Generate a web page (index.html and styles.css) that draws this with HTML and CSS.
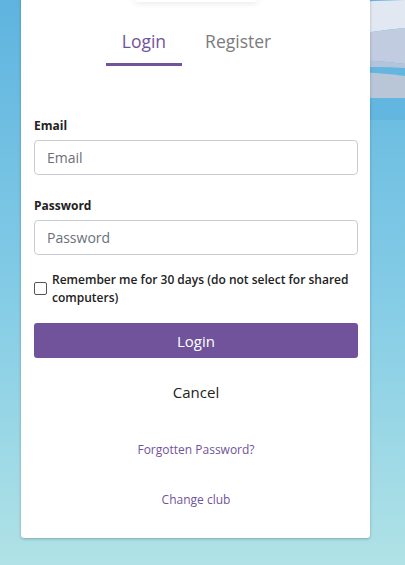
FILE: index.html
```html
<!DOCTYPE html>
<html>
<head>
<meta charset="utf-8">
<link rel="stylesheet" href="styles.css">
</head>
<body>
<svg class="waves" width="60" height="120" viewBox="0 0 60 120" aria-hidden="true">
  <rect x="0" y="0" width="60" height="120" fill="#62b6e0"/>
  <path d="M0 2 L60 0 L60 28 Q30 30 0 38 Z" fill="#e2e8f1"/>
  <path d="M0 38 Q30 30 60 28 L60 64 Q30 60 0 60 Z" fill="#c1cce0"/>
  <path d="M0 60 Q30 60 60 64 L60 68 Q30 66 0 68 Z" fill="#b4c4da"/>
  <path d="M0 72 Q30 72 60 76 L60 98 L0 98 Z" fill="#b9c6d8"/>
</svg>
<main class="card">
  <div class="logo"></div>
  <nav class="tabs">
    <a class="tab active">Login</a>
    <a class="tab">Register</a>
  </nav>
  <form class="form">
    <label class="label">Email</label>
    <input class="input" type="text" placeholder="Email">
    <label class="label">Password</label>
    <input class="input" type="password" placeholder="Password">
    <label class="remember">
      <span class="box"></span>
      <span>Remember me for 30 days (do not select for shared computers)</span>
    </label>
    <button class="btn" type="button">Login</button>
    <div class="cancel">Cancel</div>
    <a class="link forgot">Forgotten Password?</a>
    <a class="link change">Change club</a>
  </form>
</main>
</body>
</html>
```
FILE: styles.css
```css
html, body { margin: 0; padding: 0; }
body {
  width: 405px;
  height: 565px;
  overflow: hidden;
  background: linear-gradient(to bottom, #5eb4df 0%, #86cde6 55%, #b0e2e6 100%);
  font-family: "Open Sans", sans-serif;
  position: relative;
}
.waves { position: absolute; right: 0; top: 0; }
.card {
  position: relative;
  margin: -60px 0 0 21px;
  width: 349px;
  height: 598px;
  background: #fff;
  border-radius: 3px;
  box-shadow: 0 1px 3px rgba(0,0,0,0.25);
  box-sizing: border-box;
  padding: 0 12px 0 13px;
}
.logo {
  margin: 0 auto;
  width: 124px;
  height: 62px;
  border-radius: 4px;
  box-shadow: 0 2px 6px rgba(0,0,0,0.08);
  background: #fff;
}
.tabs {
  display: flex;
  justify-content: center;
  gap: 7px;
  margin-top: 27px;
  margin-left: 1px;
}
.tab {
  font-size: 17.5px;
  color: #7b7b7b;
  padding: 0 16px 10px;
  border-bottom: 3px solid transparent;
  line-height: 24px;
}
.tab.active { color: #71539b; border-bottom-color: #71539b; }
.form { display: flex; flex-direction: column; padding-top: 52px; }
.label {
  font-size: 12px;
  font-weight: 700;
  color: #222;
  line-height: 16px;
  margin-bottom: 6px;
}
.input {
  height: 35px;
  box-sizing: border-box;
  border: 1px solid #c9ccd2;
  border-radius: 4px;
  padding: 0 12px;
  font-family: "Open Sans", sans-serif;
  font-size: 14px;
  margin-bottom: 23px;
  outline: none;
}
.input::placeholder { color: #6b7077; }
.remember {
  display: flex;
  align-items: center;
  gap: 5px;
  font-size: 12px;
  font-weight: 600;
  color: #222;
  line-height: 17.5px;
  margin-top: -7px;
}
.box {
  flex: none;
  width: 11px;
  height: 11px;
  border: 1px solid #555;
  border-radius: 2px;
}
.btn {
  margin-top: 17px;
  height: 35px;
  background: #71539b;
  color: #fff;
  border: none;
  border-radius: 3px;
  font-family: "Open Sans", sans-serif;
  font-size: 15px;
}
.cancel {
  text-align: center;
  font-size: 15px;
  color: #222;
  margin-top: 24px;
  line-height: 20px;
}
.link {
  text-align: center;
  color: #71539b;
  font-size: 12px;
  line-height: 16px;
}
.forgot { margin-top: 40px; }
.change { margin-top: 34px; }
```
